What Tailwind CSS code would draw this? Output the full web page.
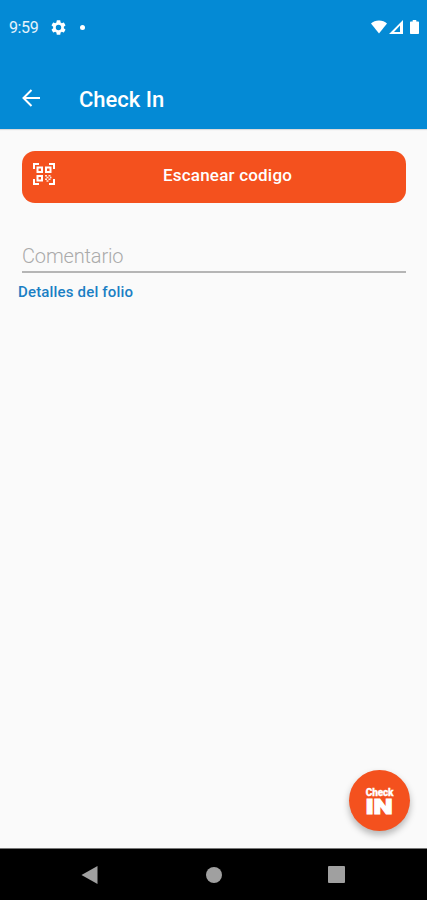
<!DOCTYPE html>
<html lang="es">
<head>
    <meta charset="UTF-8">
    <meta name="viewport" content="width=device-width, initial-scale=1.0">
    <title>Check In</title>
    <script src="https://cdn.jsdelivr.net/npm/@tailwindcss/browser@4"></script>
</head>
<body class="bg-[#fafafa] font-[Roboto,sans-serif]">
    <div class="relative flex flex-col w-full h-[900px] overflow-hidden">
        <!-- Header -->
        <header class="h-[128.5px] shrink-0 bg-[#048ad5] text-white shadow-[0_1px_1px_rgba(0,0,0,0.12)]">
            <!-- Status bar -->
            <div class="flex items-center h-[55px] pl-[9px] pr-[7px]">
                <span class="w-[42px] text-[16px] tracking-[-0.4px] text-white/90">9:59</span>
                <svg class="w-[15px] h-[15px]" viewBox="2 2 20 20" fill="currentColor">
                    <path d="M19.14 12.94c.04-.3.06-.61.06-.94s-.02-.64-.07-.94l2.03-1.58a.49.49 0 0 0 .12-.61l-1.92-3.32a.49.49 0 0 0-.59-.22l-2.39.96a7 7 0 0 0-1.62-.94l-.36-2.54a.48.48 0 0 0-.48-.41h-3.84a.47.47 0 0 0-.47.41l-.36 2.54c-.59.24-1.13.57-1.62.94l-2.39-.96a.48.48 0 0 0-.59.22L2.74 8.87a.47.47 0 0 0 .12.61l2.03 1.58a6 6 0 0 0 0 1.88l-2.03 1.58a.49.49 0 0 0-.12.61l1.92 3.32c.12.22.37.29.59.22l2.39-.96c.5.38 1.03.7 1.62.94l.36 2.54c.05.24.24.41.48.41h3.84c.24 0 .44-.17.47-.41l.36-2.54a7 7 0 0 0 1.62-.94l2.39.96c.22.08.47 0 .59-.22l1.92-3.32a.47.47 0 0 0-.12-.61zM12 15.6a3.6 3.6 0 1 1 0-7.2 3.6 3.6 0 0 1 0 7.2z"/>
                </svg>
                <span class="ml-[14px] size-[5px] rounded-full bg-white"></span>
                <div class="flex items-center ml-auto -mt-px">
                    <svg class="w-4 h-[14px]" viewBox="0 0 16 14" fill="currentColor">
                        <path d="M8 13.5 0 3.6C2 1.7 4.8.6 8 .6s6 1.1 8 3z"/>
                    </svg>
                    <svg class="ml-[2px] w-[14px] h-[14px]" viewBox="0 0 14 14" fill="currentColor">
                        <path fill-rule="evenodd" d="M0 14 14 0v14zM5 12h6V5.500z"/>
                    </svg>
                    <svg class="ml-[7px] mr-px w-[9px] h-[14px]" viewBox="0 0 9 14" fill="currentColor">
                        <path d="M2.7 0h3.6v1.5H8c.6 0 1 .4 1 1V13c0 .6-.4 1-1 1H1c-.6 0-1-.4-1-1V2.5c0-.6.4-1 1-1h1.7z"/>
                    </svg>
                </div>
            </div>
            <!-- App bar -->
            <div class="flex items-center h-[73px] pl-[22px] pt-4">
                <svg class="w-[18px] h-[18px] -mt-[3px]" viewBox="0 0 18 18" fill="none" stroke="currentColor" stroke-width="2">
                    <path d="M18 9H1.500M9.500 1 1.500 9l8 8"/>
                </svg>
                <h1 class="ml-[39px] text-[22px] font-medium leading-none">Check In</h1>
            </div>
        </header>

        <!-- Main Content -->
        <main class="grow px-[22px] pt-[22px]">
            <button class="flex items-center w-[384px] h-[52px] rounded-[13px] bg-[#f4511e] text-white pl-[11px]">
                <svg class="w-[22px] h-[22px] -mt-[5px]" viewBox="0 0 22 22" fill="none" stroke="currentColor">
                    <path stroke-width="2" d="M1 6V1h5M16 1h5v5M1 16v5h5M16 21h5v-5"/>
                    <path stroke-width="2" d="M4.500 4.500H9V9H4.500zM13 4.500h4.500V9H13zM4.500 13H9v4.500H4.500z"/>
                    <path stroke-width="1.4" stroke-opacity=".85" d="M12 12.700h2M15.500 12.700h2M13.500 14.500h2M17 14.500h1.500M12 16.200h2M15.500 16.200h2M13.500 18h2"/>
                </svg>
                <span class="ml-[108px] -mt-[2px] text-[17px] font-medium tracking-[0.2px] whitespace-nowrap">Escanear codigo</span>
            </button>

            <div class="mt-[38px] w-[384px] h-[32px] border-b-2 border-[#b5b5b5] text-[20px] font-light leading-[30px] tracking-[-0.15px] text-[#aaaaaa]">Comentario</div>
            <a class="block -ml-1 mt-[8px] text-[15px] font-medium leading-[22px] tracking-[0.17px] text-[#1b7fc4]">Detalles del folio</a>
        </main>

        <!-- Check in button -->
        <button class="absolute left-[349px] top-[770px] flex flex-col items-center size-[61px] rounded-full bg-[#f4511e] pt-[18px] text-white shadow-[0_4px_7px_rgba(0,0,0,0.28)]">
            <span class="text-[10px] font-black leading-[9px] tracking-[-0.2px] [-webkit-text-stroke:0.3px_white]">Check</span>
            <span class="mt-[2px] text-[20px] font-black leading-[16px] scale-x-[1.36] [-webkit-text-stroke:1px_white]">IN</span>
        </button>

        <!-- Navigation -->
        <nav class="flex items-center h-[52px] shrink-0 border-t border-[#777777] bg-black pl-[81px] pr-[82px] justify-between">
            <svg class="w-[17px] h-[18px]" viewBox="0 0 17 18" fill="#a0a0a0"><path d="M16.500 0v18L.5 9z"/></svg>
            <span class="ml-px size-4 rounded-full bg-[#a0a0a0]"></span>
            <span class="size-[17px] rounded-[1px] bg-[#a0a0a0]"></span>
        </nav>
    </div>
</body>
</html>
